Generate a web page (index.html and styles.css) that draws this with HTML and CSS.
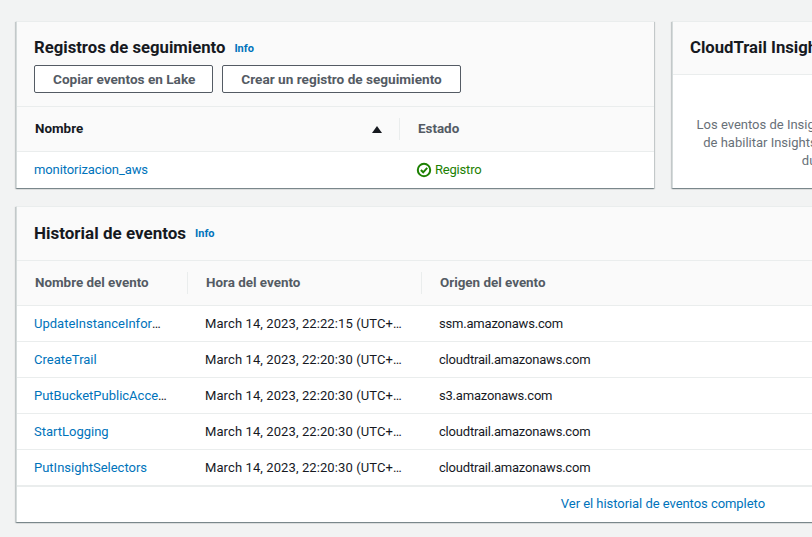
FILE: index.html
```html
<!DOCTYPE html>
<html lang="es">

<head>
    <meta charset="UTF-8">
    <meta name="viewport" content="width=device-width, initial-scale=1.0">
    <title>CloudTrail</title>
    <link rel="stylesheet" href="styles.css">
</head>

<body>
    <div class="top-row">
        <section class="panel trails">
            <div class="panel-head">
                <div class="title-line">
                    <h2>Registros de seguimiento</h2>
                    <a class="info" href="#">Info</a>
                </div>
                <div class="actions">
                    <button>Copiar eventos en Lake</button>
                    <button>Crear un registro de seguimiento</button>
                </div>
            </div>
            <div class="row row-head trails-cols">
                <div class="cell sorted">
                    <span>Nombre</span>
                    <svg class="sort-icon" width="10" height="7" viewBox="0 0 10 7">
                        <path d="M5 0 10 7H0z" fill="#16191f" />
                    </svg>
                </div>
                <div class="cell">Estado</div>
            </div>
            <div class="row trails-cols">
                <div class="cell"><a href="#">monitorizacion_aws</a></div>
                <div class="cell status">
                    <svg width="16" height="16" viewBox="0 0 16 16" fill="none" stroke="#1d8102" stroke-width="2">
                        <circle cx="8" cy="8" r="6.2" />
                        <path d="M4.9 8 7.2 10.3 11.2 5.9" />
                    </svg>
                    <span>Registro</span>
                </div>
            </div>
        </section>

        <section class="panel insights">
            <div class="insights-head">
                <h2>CloudTrail Insights</h2>
            </div>
            <p class="empty">
                Los eventos de Insights aparecen aquí hasta 36 horas después de<br>
                de habilitar Insights si se detecta actividad inusual en la cuenta,<br>
                durante el periodo de análisis
            </p>
        </section>
    </div>

    <section class="panel history">
        <div class="history-head">
            <h2>Historial de eventos</h2>
            <a class="info" href="#">Info</a>
        </div>
        <div class="row row-head history-cols">
            <div class="cell">Nombre del evento</div>
            <div class="cell">Hora del evento</div>
            <div class="cell">Origen del evento</div>
        </div>
        <div class="row history-cols">
            <div class="cell"><a href="#">UpdateInstanceInformation</a></div>
            <div class="cell">March 14, 2023, 22:22:15 (UTC+01:00)</div>
            <div class="cell">ssm.amazonaws.com</div>
        </div>
        <div class="row history-cols">
            <div class="cell"><a href="#">CreateTrail</a></div>
            <div class="cell">March 14, 2023, 22:20:30 (UTC+01:00)</div>
            <div class="cell">cloudtrail.amazonaws.com</div>
        </div>
        <div class="row history-cols">
            <div class="cell"><a href="#">PutBucketPublicAccessBlock</a></div>
            <div class="cell">March 14, 2023, 22:20:30 (UTC+01:00)</div>
            <div class="cell">s3.amazonaws.com</div>
        </div>
        <div class="row history-cols">
            <div class="cell"><a href="#">StartLogging</a></div>
            <div class="cell">March 14, 2023, 22:20:30 (UTC+01:00)</div>
            <div class="cell">cloudtrail.amazonaws.com</div>
        </div>
        <div class="row history-cols">
            <div class="cell"><a href="#">PutInsightSelectors</a></div>
            <div class="cell">March 14, 2023, 22:20:30 (UTC+01:00)</div>
            <div class="cell">cloudtrail.amazonaws.com</div>
        </div>
        <div class="history-foot">
            <a href="#">Ver el historial de eventos completo</a>
        </div>
    </section>
</body>

</html>
```

FILE: styles.css
```css
/* Page */
html,
body {
    height: 100%;
    overflow: hidden;
}

body {
    margin: 0;
    padding: 21px 0 0 16px;
    box-sizing: border-box;
    width: 1330px;
    background-color: #f2f3f3;
    color: #16191f;
    font-family: Roboto, Arial, sans-serif;
    font-size: 13px;
    line-height: 20px;
}

a {
    color: #0073bb;
    text-decoration: none;
}

h2 {
    margin: 0;
    font-size: 16.7px;
    font-weight: 700;
    line-height: 22px;
}

/* Panels */
.top-row {
    display: flex;
    gap: 18px;
    margin-bottom: 18px;
}

.panel {
    background-color: #fff;
    border-top: 1px solid #eaeded;
    border-left: 1px solid #d5dbdb;
    box-shadow: 0 1px 1px 0 rgba(0, 28, 36, 0.3), 1px 1px 1px 0 rgba(0, 28, 36, 0.15), -1px 1px 1px 0 rgba(0, 28, 36, 0.15);
    box-sizing: border-box;
}

.trails {
    width: 638px;
    height: 167px;
}

.insights {
    width: 428px;
    height: 167px;
}

.history {
    width: 1300px;
    height: 316px;
}

.panel-head {
    height: 85px;
    padding: 15px 17px 0;
    box-sizing: border-box;
    background-color: #fafafa;
    border-bottom: 1px solid #eaeded;
}

.title-line {
    display: flex;
    align-items: center;
    gap: 9px;
    margin-bottom: 6px;
}

.info {
    margin-top: 2px;
    font-size: 11px;
    font-weight: 700;
}

.actions {
    display: flex;
    gap: 9px;
}

button {
    height: 28px;
    padding: 0 18px;
    background-color: #fff;
    border: 1px solid #545b64;
    border-radius: 2px;
    color: #545b64;
    font-family: inherit;
    font-size: 13.6px;
    font-weight: 700;
}

button:first-child {
    padding-right: 17px;
}

/* Rows */
.row {
    display: grid;
    align-items: center;
    height: 36px;
    box-sizing: border-box;
    border-bottom: 1px solid #eaeded;
}

.row-head {
    height: 45px;
    background-color: #fafafa;
    color: #545b64;
    font-size: 13.4px;
    font-weight: 700;
}

.trails-cols {
    grid-template-columns: 383px 1fr;
}

.history-cols {
    grid-template-columns: 171px 234px 1fr;
}

.trails .row:last-child {
    border-bottom: none;
}

.trails .cell a {
    letter-spacing: -0.1px;
}

.cell {
    padding: 0 20px 0 17px;
    overflow: hidden;
    white-space: nowrap;
    text-overflow: ellipsis;
}

.history-cols .cell:nth-child(2) {
    letter-spacing: 0.1px;
}

.history-cols .cell:nth-child(3) {
    letter-spacing: -0.2px;
}

.row-head .cell {
    height: 22px;
    padding-left: 18px;
    line-height: 22px;
    border-right: 1px solid #eaeded;
}

.row-head .cell:nth-child(n) {
    letter-spacing: normal;
}

.row-head .cell:last-child {
    border-right: none;
}

.sorted {
    display: flex;
    justify-content: space-between;
    align-items: center;
    padding-right: 17px;
    color: #16191f;
}

.status {
    display: flex;
    align-items: center;
    gap: 3px;
    padding-left: 16px;
    color: #1d8102;
    letter-spacing: -0.2px;
}

/* Insights card */
.insights-head {
    height: 53px;
    padding: 15px 17px 0;
    box-sizing: border-box;
    background-color: #fafafa;
    border-bottom: 1px solid #eaeded;
}

.empty {
    margin: 41px 0 0;
    color: #687078;
    text-align: center;
    line-height: 18px;
    white-space: nowrap;
}

/* History card */
.history-head {
    display: flex;
    align-items: center;
    gap: 9px;
    height: 54px;
    padding: 0 17px 2px;
    box-sizing: border-box;
    background-color: #fafafa;
    border-bottom: 1px solid #eaeded;
}

.history-head h2 {
    font-size: 17px;
}

.history-foot {
    padding: 7px 551px 0 0;
    text-align: right;
    border-top: 1px solid #eaeded;
    letter-spacing: -0.05px;
}
```
